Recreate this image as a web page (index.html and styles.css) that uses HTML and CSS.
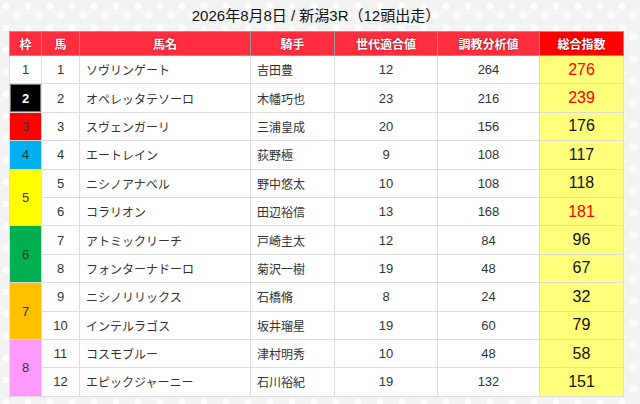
FILE: index.html
```html
<!DOCTYPE html>
<html lang="ja">
<head>
<meta charset="utf-8">
<link rel="stylesheet" href="styles.css">
</head>
<body>
<div class="wrap">
  <h1 class="title">2026年8月8日 / 新潟3R（12頭出走）</h1>
  <table class="race">
    <colgroup>
      <col class="c-waku"><col class="c-uma"><col class="c-name"><col class="c-jockey"><col class="c-gen"><col class="c-train"><col class="c-total">
    </colgroup>
    <thead>
      <tr>
        <th>枠</th><th>馬</th><th>馬名</th><th>騎手</th><th>世代適合値</th><th>調教分析値</th><th class="th-total">総合指数</th>
      </tr>
    </thead>
    <tbody>
      <tr><td class="waku w1">1</td><td class="num">1</td><td class="txt">ソヴリンゲート</td><td class="txt">吉田豊</td><td class="num">12</td><td class="num">264</td><td class="total hi">276</td></tr>
      <tr><td class="waku w2">2</td><td class="num">2</td><td class="txt">オペレッタテソーロ</td><td class="txt">木幡巧也</td><td class="num">23</td><td class="num">216</td><td class="total hi">239</td></tr>
      <tr><td class="waku w3">3</td><td class="num">3</td><td class="txt">スヴェンガーリ</td><td class="txt">三浦皇成</td><td class="num">20</td><td class="num">156</td><td class="total">176</td></tr>
      <tr><td class="waku w4">4</td><td class="num">4</td><td class="txt">エートレイン</td><td class="txt">荻野極</td><td class="num">9</td><td class="num">108</td><td class="total">117</td></tr>
      <tr><td class="waku w5" rowspan="2">5</td><td class="num">5</td><td class="txt">ニシノアナベル</td><td class="txt">野中悠太</td><td class="num">10</td><td class="num">108</td><td class="total">118</td></tr>
      <tr><td class="num">6</td><td class="txt">コラリオン</td><td class="txt">田辺裕信</td><td class="num">13</td><td class="num">168</td><td class="total hi">181</td></tr>
      <tr><td class="waku w6" rowspan="2">6</td><td class="num">7</td><td class="txt">アトミックリーチ</td><td class="txt">戸崎圭太</td><td class="num">12</td><td class="num">84</td><td class="total">96</td></tr>
      <tr><td class="num">8</td><td class="txt">フォンターナドーロ</td><td class="txt">菊沢一樹</td><td class="num">19</td><td class="num">48</td><td class="total">67</td></tr>
      <tr><td class="waku w7" rowspan="2">7</td><td class="num">9</td><td class="txt">ニシノリリックス</td><td class="txt">石橋脩</td><td class="num">8</td><td class="num">24</td><td class="total">32</td></tr>
      <tr><td class="num">10</td><td class="txt">インテルラゴス</td><td class="txt">坂井瑠星</td><td class="num">19</td><td class="num">60</td><td class="total">79</td></tr>
      <tr><td class="waku w8" rowspan="2">8</td><td class="num">11</td><td class="txt">コスモブルー</td><td class="txt">津村明秀</td><td class="num">10</td><td class="num">48</td><td class="total">58</td></tr>
      <tr><td class="num">12</td><td class="txt">エピックジャーニー</td><td class="txt">石川裕紀</td><td class="num">19</td><td class="num">132</td><td class="total">151</td></tr>
    </tbody>
  </table>
</div>
</body>
</html>
```
FILE: styles.css
```css
html, body {
  margin: 0;
  padding: 0;
}
body {
  background-color: #f3f3f3;
  background-image:
    radial-gradient(circle at 6px 6px, rgba(255,255,255,0.9) 0 3px, transparent 3.5px),
    radial-gradient(circle at 17px 15px, rgba(255,255,255,0.7) 0 4px, transparent 4.5px);
  background-size: 22px 22px, 22px 22px;
  font-family: "Noto Sans CJK JP", "Noto Sans", sans-serif;
  color: #333;
}
.wrap {
  width: 614px;
  padding: 5px 0 0 9px;
}
.title {
  margin: 0 0 5px 0;
  height: 21px;
  line-height: 21px;
  font-family: "Liberation Sans", "Noto Sans CJK JP", sans-serif;
  font-size: 15px;
  font-weight: 400;
  color: #111;
  text-align: center;
}
.race {
  width: 614px;
  table-layout: fixed;
  border-collapse: collapse;
  background: #fff;
  font-size: 12px;
}
.c-waku { width: 32px; }
.c-uma { width: 38px; }
.c-name { width: 171px; }
.c-jockey { width: 84px; }
.c-gen { width: 103px; }
.c-train { width: 102px; }
.c-total { width: 84px; }

.race th {
  height: 23px;
  padding: 0;
  background: #ff2e3e;
  border: 1px solid #9a9a9a;
  color: #fff;
  font-weight: 700;
  font-size: 12px;
  text-shadow: 0 0 2px rgba(90,0,0,0.8);
  text-align: center;
}
.race th.th-total {
  background: #ff0000;
}
.race td {
  height: 27.4px;
  padding: 0;
  border: 1px solid #dcdcdc;
  text-align: center;
  color: #333;
}
.race td.num,
.race td.waku {
  font-family: "Liberation Sans", sans-serif;
  font-size: 13px;
}
.race td.txt {
  text-align: left;
  padding-left: 6px;
}
.race td.total {
  background: #ffff7a;
  font-family: "Liberation Sans", sans-serif;
  font-size: 16px;
  color: #111;
}
.race td.total.hi {
  color: #ff0000;
}
.waku.w1 { background: #fff; }
.race td.waku.w2 {
  background: #000;
  color: #fff;
  font-weight: 700;
  box-shadow: inset 0 0 0 1px #777;
}
.race td.waku.w3 { background: #ff0000; color: #333; }
.race td.waku.w4 { background: #00b0f0; color: #333; }
.race td.waku.w5 { background: #ffff00; color: #333; }
.race td.waku.w6 { background: #00b050; color: #333; }
.race td.waku.w7 { background: #ffc000; color: #333; }
.race td.waku.w8 { background: #ff99ff; color: #333; }
```
